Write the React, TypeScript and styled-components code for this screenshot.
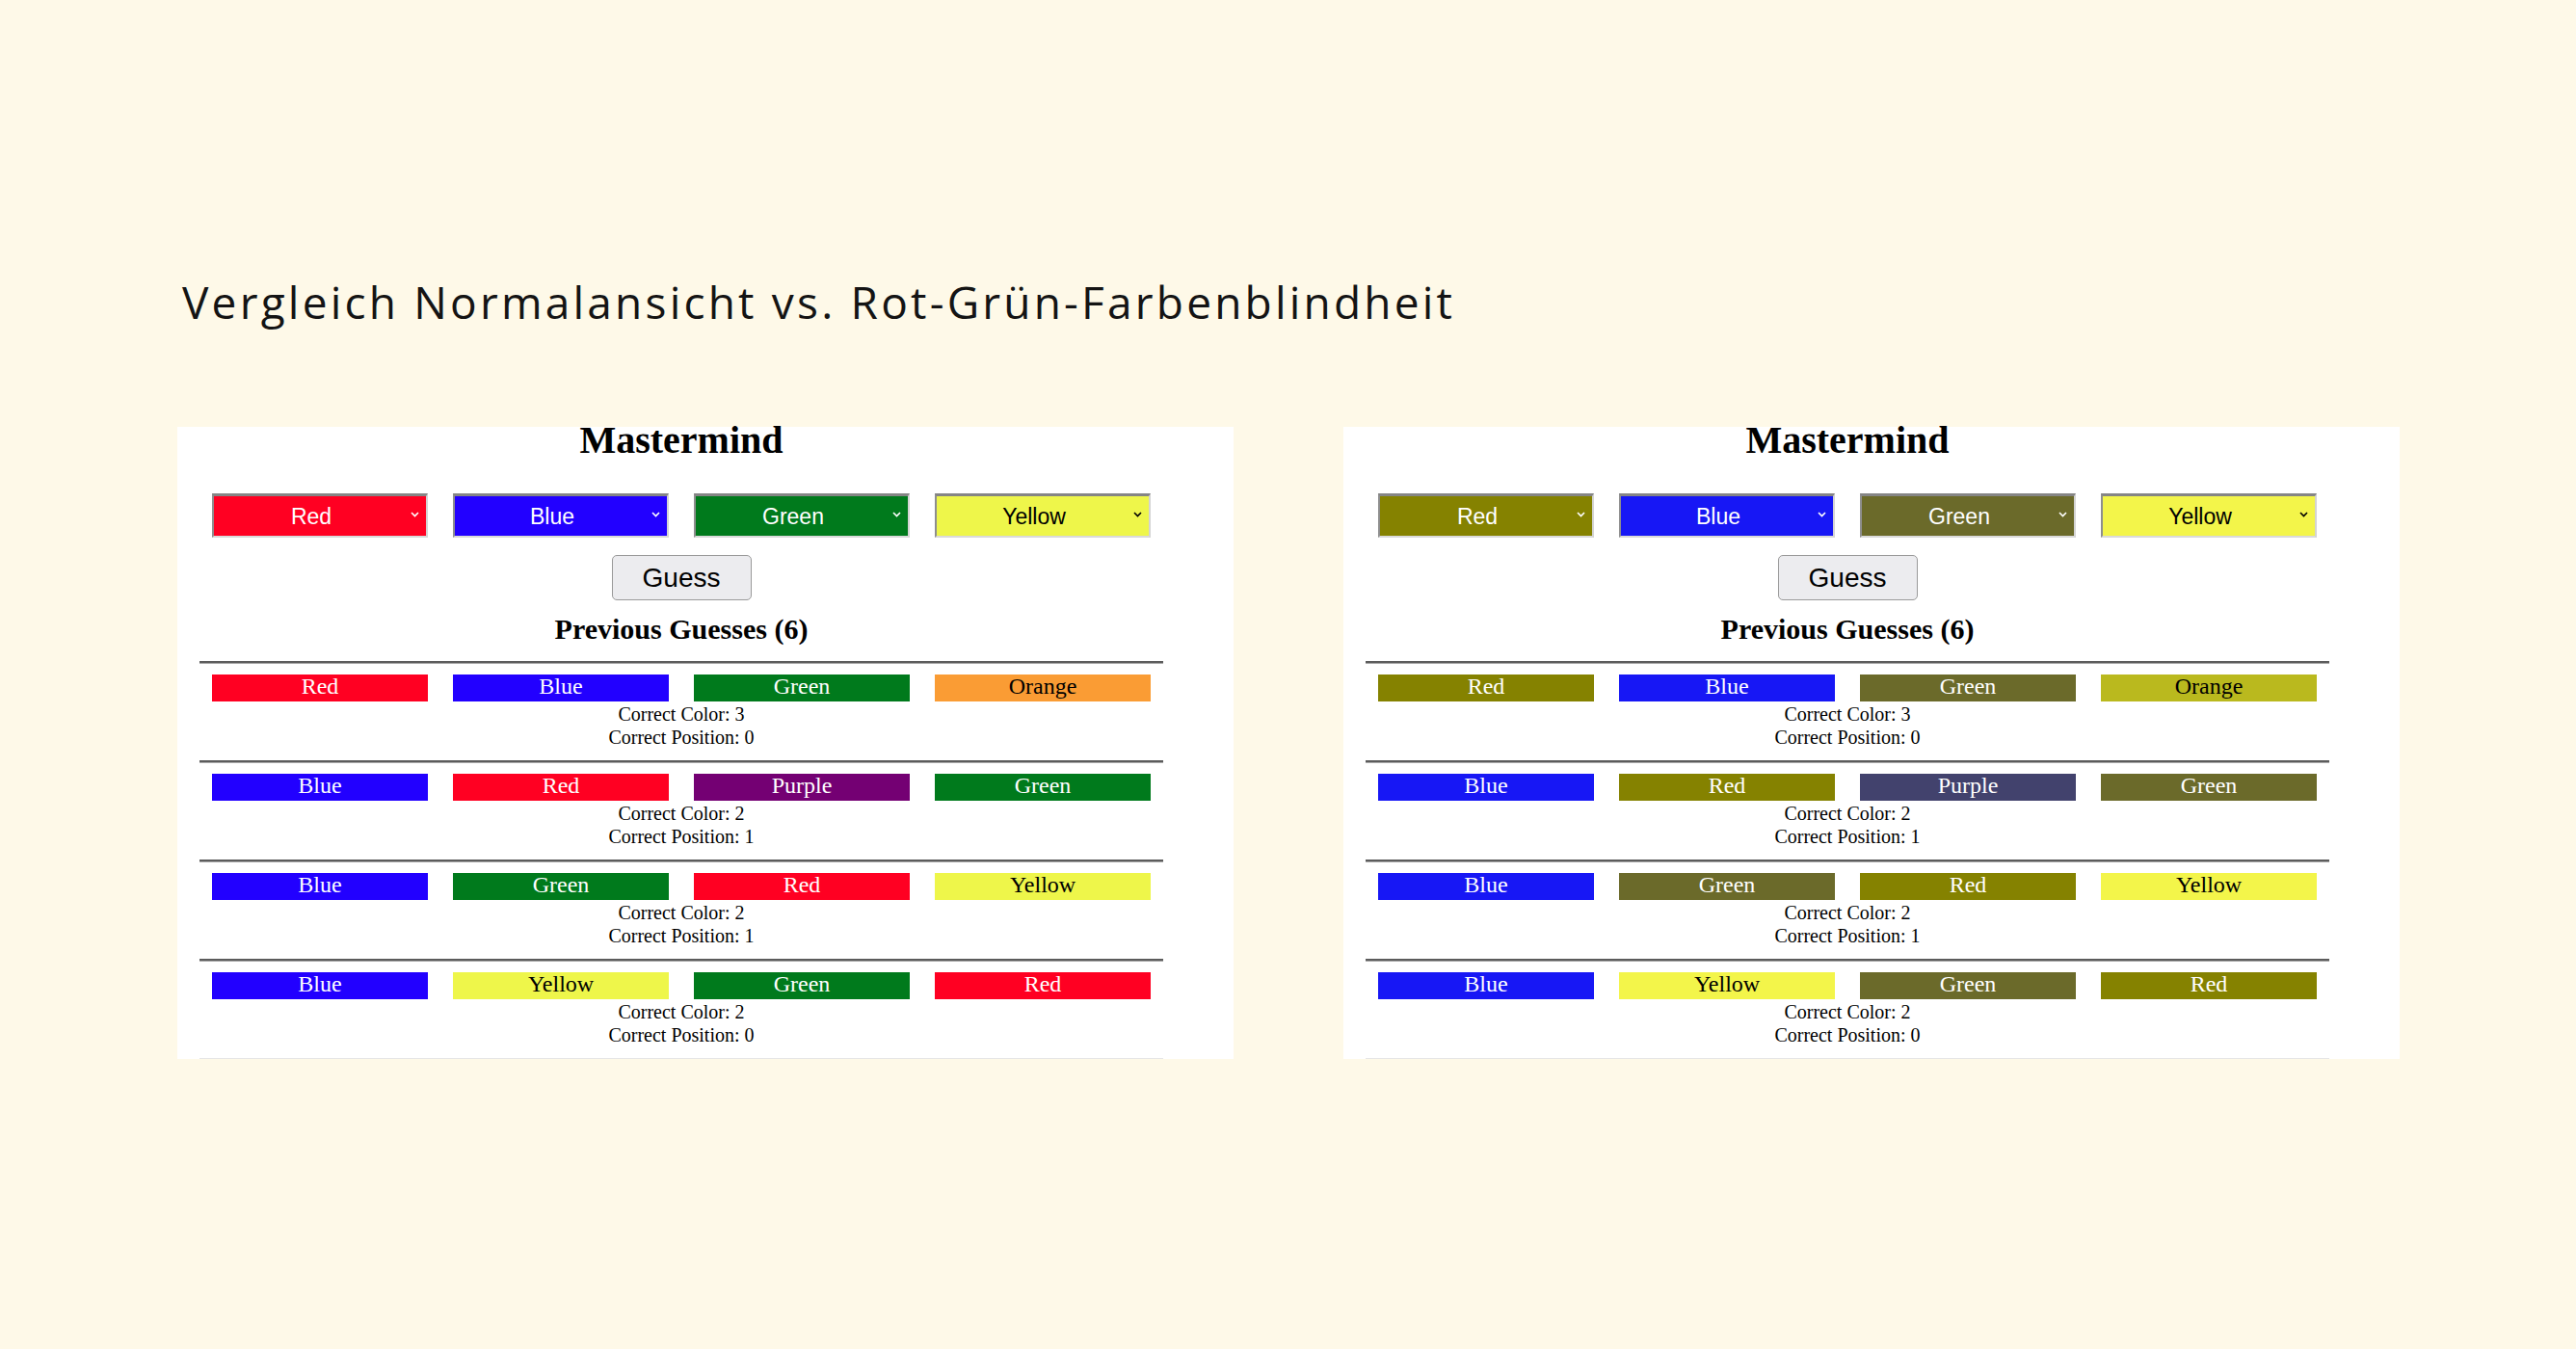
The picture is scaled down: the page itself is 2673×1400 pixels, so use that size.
import React, { useState } from "react";
import styled, { createGlobalStyle } from "styled-components";

type ColorName = "Red" | "Blue" | "Green" | "Yellow" | "Orange" | "Purple";

type Swatch = { bg: string; fg: string };
type Palette = Record<ColorName, Swatch>;

const normal: Palette = {
  Red: { bg: "#ff0022", fg: "#ffffff" },
  Blue: { bg: "#2200ff", fg: "#ffffff" },
  Green: { bg: "#007a1c", fg: "#ffffff" },
  Yellow: { bg: "#eef64a", fg: "#000000" },
  Orange: { bg: "#fa9c34", fg: "#000000" },
  Purple: { bg: "#740073", fg: "#ffffff" },
};

// same board as seen with red-green colour blindness
const deutan: Palette = {
  Red: { bg: "#858200", fg: "#ffffff" },
  Blue: { bg: "#1717f5", fg: "#ffffff" },
  Green: { bg: "#6b6a2a", fg: "#ffffff" },
  Yellow: { bg: "#f3f54a", fg: "#000000" },
  Orange: { bg: "#bab91e", fg: "#000000" },
  Purple: { bg: "#42426d", fg: "#ffffff" },
};

const guesses: { pegs: ColorName[]; color: number; position: number }[] = [
  { pegs: ["Red", "Blue", "Green", "Orange"], color: 3, position: 0 },
  { pegs: ["Blue", "Red", "Purple", "Green"], color: 2, position: 1 },
  { pegs: ["Blue", "Green", "Red", "Yellow"], color: 2, position: 1 },
  { pegs: ["Blue", "Yellow", "Green", "Red"], color: 2, position: 0 },
];

const options: ColorName[] = ["Red", "Blue", "Green", "Yellow", "Orange", "Purple"];

const GlobalStyle = createGlobalStyle`
  html, body {
    margin: 0;
    padding: 0;
    background: #fef9e8;
  }
`;

const Page = styled.div`
  min-height: 1400px;
  padding: 285px 0 0 184px;
  box-sizing: border-box;
`;

const Heading = styled.h1`
  margin: 0 0 102px 5px;
  font-family: "Open Sans", "Noto Sans", sans-serif;
  font-weight: 400;
  font-size: 46px;
  line-height: 56px;
  letter-spacing: 3.2px;
  color: #141414;
`;

const Compare = styled.div`
  display: flex;
  gap: 114px;
  align-items: flex-start;
`;

const Panel = styled.section`
  width: 1096px;
  background: #ffffff;
  padding-left: 23px;
  box-sizing: border-box;
`;

const Content = styled.div`
  width: 1000px;
  display: flex;
  flex-direction: column;
  align-items: center;
  font-family: "Liberation Serif", "Times New Roman", serif;
  color: #000;
`;

const Title = styled.h2`
  margin: 0;
  font-size: 40px;
  line-height: 28px;
  font-weight: 700;
`;

const PickRow = styled.div`
  display: flex;
  gap: 26px;
  margin-top: 41px;
`;

const PickWrap = styled.div`
  position: relative;
  width: 224px;
  height: 46px;
`;

const Pick = styled.select<{ $bg: string; $fg: string }>`
  appearance: none;
  width: 100%;
  height: 100%;
  margin: 0;
  padding: 0 18px 0 0;
  box-sizing: border-box;
  background: ${(p) => p.$bg};
  color: ${(p) => p.$fg};
  border-style: solid;
  border-width: 3px 2px 2px 2px;
  border-color: #858585 #d4d4d4 #dadada #8e8e8e;
  border-radius: 0;
  font-family: "Liberation Sans", Arial, sans-serif;
  font-size: 23px;
  text-align: center;
  text-align-last: center;
  outline: none;
`;

const Chevron = styled.svg`
  position: absolute;
  right: 9px;
  top: 19px;
  pointer-events: none;
`;

const GuessButton = styled.button`
  margin-top: 18px;
  width: 145px;
  height: 47px;
  padding: 0;
  background: #ececef;
  border: 1.5px solid #9a9a9a;
  border-radius: 5px;
  font-family: "Liberation Sans", Arial, sans-serif;
  font-size: 28px;
  color: #000;
  cursor: pointer;
`;

const Subtitle = styled.h3`
  margin: 12px 0 15px;
  font-size: 30px;
  line-height: 36px;
  font-weight: 700;
`;

const Rule = styled.hr<{ $faded?: boolean }>`
  width: 1000px;
  margin: 0;
  border: 0;
  border-top: ${(p) => (p.$faded ? "1px solid #e6e6e6" : "2px solid #5c5c5c")};
  border-bottom: ${(p) => (p.$faded ? "0" : "1px solid #a8a8a8")};
`;

const GuessRow = styled.div`
  display: flex;
  flex-direction: column;
  align-items: center;
  padding: 11px 0 12px;
`;

const Pegs = styled.div`
  display: flex;
  gap: 26px;
`;

const Peg = styled.div<{ $bg: string; $fg: string }>`
  width: 224px;
  height: 28px;
  background: ${(p) => p.$bg};
  color: ${(p) => p.$fg};
  font-size: 24px;
  line-height: 25px;
  text-align: center;
`;

const Feedback = styled.div`
  margin-top: 1px;
  font-size: 20px;
  line-height: 24px;
  text-align: center;
`;

function ColorPick({ palette, initial }: { palette: Palette; initial: ColorName }) {
  const [value, setValue] = useState<ColorName>(initial);
  const sw = palette[value];
  return (
    <PickWrap>
      <Pick
        $bg={sw.bg}
        $fg={sw.fg}
        value={value}
        onChange={(e) => setValue(e.target.value as ColorName)}
      >
        {options.map((o) => (
          <option key={o} value={o}>
            {o}
          </option>
        ))}
      </Pick>
      <Chevron width="9" height="6" viewBox="0 0 9 6">
        <path d="M1 1l3.5 3.5L8 1" fill="none" stroke={sw.fg} strokeWidth="1.6" />
      </Chevron>
    </PickWrap>
  );
}

function Board({ palette }: { palette: Palette }) {
  const start: ColorName[] = ["Red", "Blue", "Green", "Yellow"];
  return (
    <Panel>
      <Content>
        <Title>Mastermind</Title>
        <PickRow>
          {start.map((c, i) => (
            <ColorPick key={i} palette={palette} initial={c} />
          ))}
        </PickRow>
        <GuessButton>Guess</GuessButton>
        <Subtitle>Previous Guesses (6)</Subtitle>
        {guesses.map((g, i) => (
          <React.Fragment key={i}>
            <Rule />
            <GuessRow>
              <Pegs>
                {g.pegs.map((c, j) => (
                  <Peg key={j} $bg={palette[c].bg} $fg={palette[c].fg}>
                    {c}
                  </Peg>
                ))}
              </Pegs>
              <Feedback>
                Correct Color: {g.color}
                <br />
                Correct Position: {g.position}
              </Feedback>
            </GuessRow>
          </React.Fragment>
        ))}
        <Rule $faded />
      </Content>
    </Panel>
  );
}

export default function App() {
  return (
    <>
      <GlobalStyle />
      <Page>
        <Heading>Vergleich Normalansicht vs. Rot-Grün-Farbenblindheit</Heading>
        <Compare>
          <Board palette={normal} />
          <Board palette={deutan} />
        </Compare>
      </Page>
    </>
  );
}
